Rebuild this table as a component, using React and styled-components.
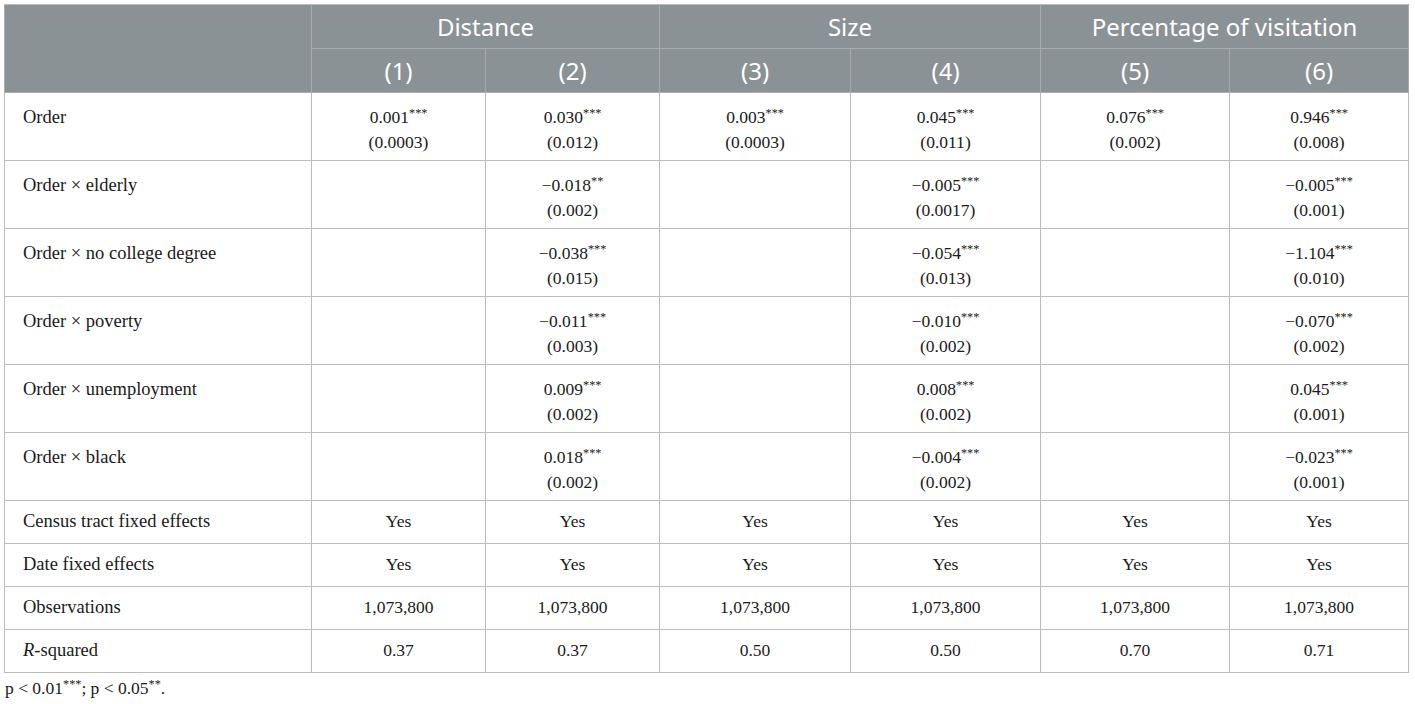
import React from "react";
import styled, { createGlobalStyle } from "styled-components";

const GlobalStyle = createGlobalStyle`
  html, body {
    margin: 0;
    padding: 0;
    background: #ffffff;
  }
`;

const columns = [174, 174, 191, 190, 189, 179];

const groups = [
  { title: "Distance", span: 2 },
  { title: "Size", span: 2 },
  { title: "Percentage of visitation", span: 2 },
];

// each cell: [value, stars, se] or null
const rows = [
  {
    label: "Order",
    cells: [
      ["0.001", "***", "0.0003"],
      ["0.030", "***", "0.012"],
      ["0.003", "***", "0.0003"],
      ["0.045", "***", "0.011"],
      ["0.076", "***", "0.002"],
      ["0.946", "***", "0.008"],
    ],
  },
  {
    label: "Order × elderly",
    cells: [null, ["−0.018", "**", "0.002"], null, ["−0.005", "***", "0.0017"], null, ["−0.005", "***", "0.001"]],
  },
  {
    label: "Order × no college degree",
    cells: [null, ["−0.038", "***", "0.015"], null, ["−0.054", "***", "0.013"], null, ["−1.104", "***", "0.010"]],
  },
  {
    label: "Order × poverty",
    cells: [null, ["−0.011", "***", "0.003"], null, ["−0.010", "***", "0.002"], null, ["−0.070", "***", "0.002"]],
  },
  {
    label: "Order × unemployment",
    cells: [null, ["0.009", "***", "0.002"], null, ["0.008", "***", "0.002"], null, ["0.045", "***", "0.001"]],
  },
  {
    label: "Order × black",
    cells: [null, ["0.018", "***", "0.002"], null, ["−0.004", "***", "0.002"], null, ["−0.023", "***", "0.001"]],
  },
];

const summary = [
  { label: "Census tract fixed effects", values: ["Yes", "Yes", "Yes", "Yes", "Yes", "Yes"] },
  { label: "Date fixed effects", values: ["Yes", "Yes", "Yes", "Yes", "Yes", "Yes"] },
  { label: "Observations", values: Array(6).fill("1,073,800") },
  { label: <><i>R</i>-squared</>, values: ["0.37", "0.37", "0.50", "0.50", "0.70", "0.71"] },
];

export default function App() {
  return (
    <Page>
      <GlobalStyle />
      <Table>
        <colgroup>
          <col style={{ width: 307 }} />
          {columns.map((w, i) => (
            <col key={i} style={{ width: w }} />
          ))}
        </colgroup>
        <thead>
          <tr>
            <HeadCell rowSpan={2} />
            {groups.map((g) => (
              <HeadCell key={g.title} colSpan={g.span}>
                {g.title}
              </HeadCell>
            ))}
          </tr>
          <tr>
            {columns.map((_, i) => (
              <HeadCell key={i}>({i + 1})</HeadCell>
            ))}
          </tr>
        </thead>
        <tbody>
          {rows.map((row) => (
            <tr key={row.label}>
              <Label $top>{row.label}</Label>
              {row.cells.map((c, i) => (
                <Cell key={i} $top>
                  {c && (
                    <>
                      {c[0]}
                      <Sup>{c[1]}</Sup>
                      <br />({c[2]})
                    </>
                  )}
                </Cell>
              ))}
            </tr>
          ))}
          {summary.map((row, r) => (
            <tr key={r}>
              <Label>{row.label}</Label>
              {row.values.map((v, i) => (
                <Cell key={i}>{v}</Cell>
              ))}
            </tr>
          ))}
        </tbody>
      </Table>
      <Footnote>
        p &lt; 0.01<Sup>***</Sup>; p &lt; 0.05<Sup>**</Sup>.
      </Footnote>
    </Page>
  );
}

const Page = styled.div`
  padding: 4px 6px 0 4px;
  width: 1405px;
`;

const Table = styled.table`
  width: 1405px;
  table-layout: fixed;
  border-collapse: collapse;
  border: 1px solid #bcbcbc;
`;

const HeadCell = styled.th`
  background: #8b9296;
  color: #ffffff;
  font-family: "Noto Sans", "Open Sans", sans-serif;
  font-weight: 400;
  font-size: 24px;
  line-height: 30px;
  height: 43px;
  padding: 0 8px;
  text-align: center;
  vertical-align: middle;
  border: 1px solid #a6acaf;
  border-top-color: #bcbcbc;
`;

const Label = styled.td`
  font-family: "Liberation Serif", "DejaVu Serif", serif;
  font-size: 18.5px;
  line-height: 25px;
  color: #1a1a1a;
  padding: ${(p) => (p.$top ? "12px 18px 5px" : "8px 18px 9px")};
  vertical-align: ${(p) => (p.$top ? "top" : "middle")};
  border: 1px solid #bcbcbc;
  text-align: left;
`;

const Cell = styled(Label)`
  font-size: 17.5px;
  text-align: center;
  padding-left: 8px;
  padding-right: 8px;
`;

const Sup = styled.sup`
  font-size: 0.7em;
  line-height: 0;
  vertical-align: 0.5em;
`;

const Footnote = styled.div`
  font-family: "Liberation Serif", "DejaVu Serif", serif;
  font-size: 17.5px;
  color: #1a1a1a;
  margin-top: 5px;
  padding-left: 1px;
`;
